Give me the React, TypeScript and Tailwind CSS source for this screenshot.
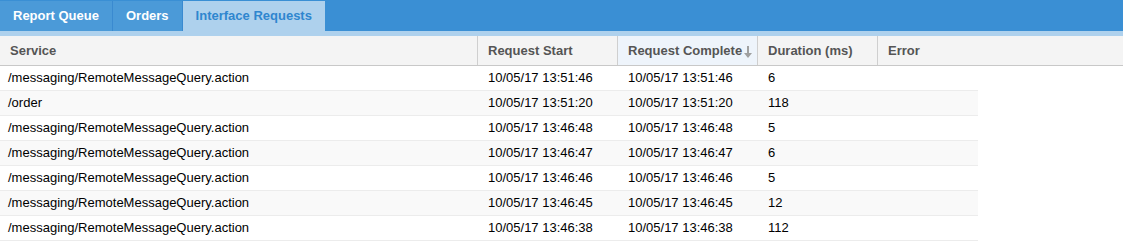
const tabs = ["Report Queue", "Orders", "Interface Requests"];

const rows = [
	["/messaging/RemoteMessageQuery.action", "10/05/17 13:51:46", "10/05/17 13:51:46", "6"],
	["/order", "10/05/17 13:51:20", "10/05/17 13:51:20", "118"],
	["/messaging/RemoteMessageQuery.action", "10/05/17 13:46:48", "10/05/17 13:46:48", "5"],
	["/messaging/RemoteMessageQuery.action", "10/05/17 13:46:47", "10/05/17 13:46:47", "6"],
	["/messaging/RemoteMessageQuery.action", "10/05/17 13:46:46", "10/05/17 13:46:46", "5"],
	["/messaging/RemoteMessageQuery.action", "10/05/17 13:46:45", "10/05/17 13:46:45", "12"],
	["/messaging/RemoteMessageQuery.action", "10/05/17 13:46:38", "10/05/17 13:46:38", "112"],
];

const SortDown = () => (
	<svg width="8" height="12" viewBox="0 0 8 12" className="ml-[2px] mt-[2px] shrink-0">
		<path d="M3 0h2v7h3l-4 5-4-5h3z" fill="#a0a0a0" />
	</svg>
);

export default function App() {
	return (
		<div className="w-[1123px] h-[244px] bg-white font-['Liberation_Sans',Arial,sans-serif] overflow-hidden">
			{/* tab strip */}
			<div className="h-[31px] bg-[#3a8fd4] flex items-end">
				{tabs.map((t, i) => (
					<div
						key={t}
						className={
							i === 2
								? "h-[30px] px-[13px] flex items-center bg-[#aed1ed] text-[#2f86cf] text-[13px] font-bold"
								: "h-[30px] px-[13px] flex items-center bg-[#4b9ad8] text-white text-[13px] font-bold border-r border-[#3a8ad0]"
						}
					>
						{t}
					</div>
				))}
			</div>
			<div className="h-[5px] bg-[#aed1ed]" />

			{/* header */}
			<div className="flex h-[30px] bg-[#f4f4f4] border-b border-[#c8c8c8] text-[13px] font-bold text-[#555] whitespace-nowrap">
				<div className="w-[478px] px-[10px] flex items-center border-r border-[#cfcfcf]">Service</div>
				<div className="w-[140px] px-[10px] flex items-center border-r border-[#cfcfcf]">Request Start</div>
				<div className="w-[140px] pl-[10px] flex items-center border-r border-[#cfcfcf] bg-[#eef4fb]">
					Request Complete
					<SortDown />
				</div>
				<div className="w-[120px] px-[10px] flex items-center border-r border-[#cfcfcf]">Duration (ms)</div>
				<div className="flex-1 px-[10px] flex items-center">Error</div>
			</div>

			{/* rows */}
			<div className="w-[978px] text-[13px] text-black whitespace-nowrap">
				{rows.map((r, i) => (
					<div
						key={i}
						className={`flex h-[25px] items-center border-b border-[#ececec] ${i % 2 === 1 ? "bg-[#f9f9f9]" : "bg-white"}`}
					>
						<div className="w-[478px] pl-[8px]">{r[0]}</div>
						<div className="w-[140px] pl-[10px]">{r[1]}</div>
						<div className="w-[140px] pl-[10px]">{r[2]}</div>
						<div className="w-[120px] pl-[10px]">{r[3]}</div>
						<div className="flex-1" />
					</div>
				))}
			</div>
		</div>
	);
}
